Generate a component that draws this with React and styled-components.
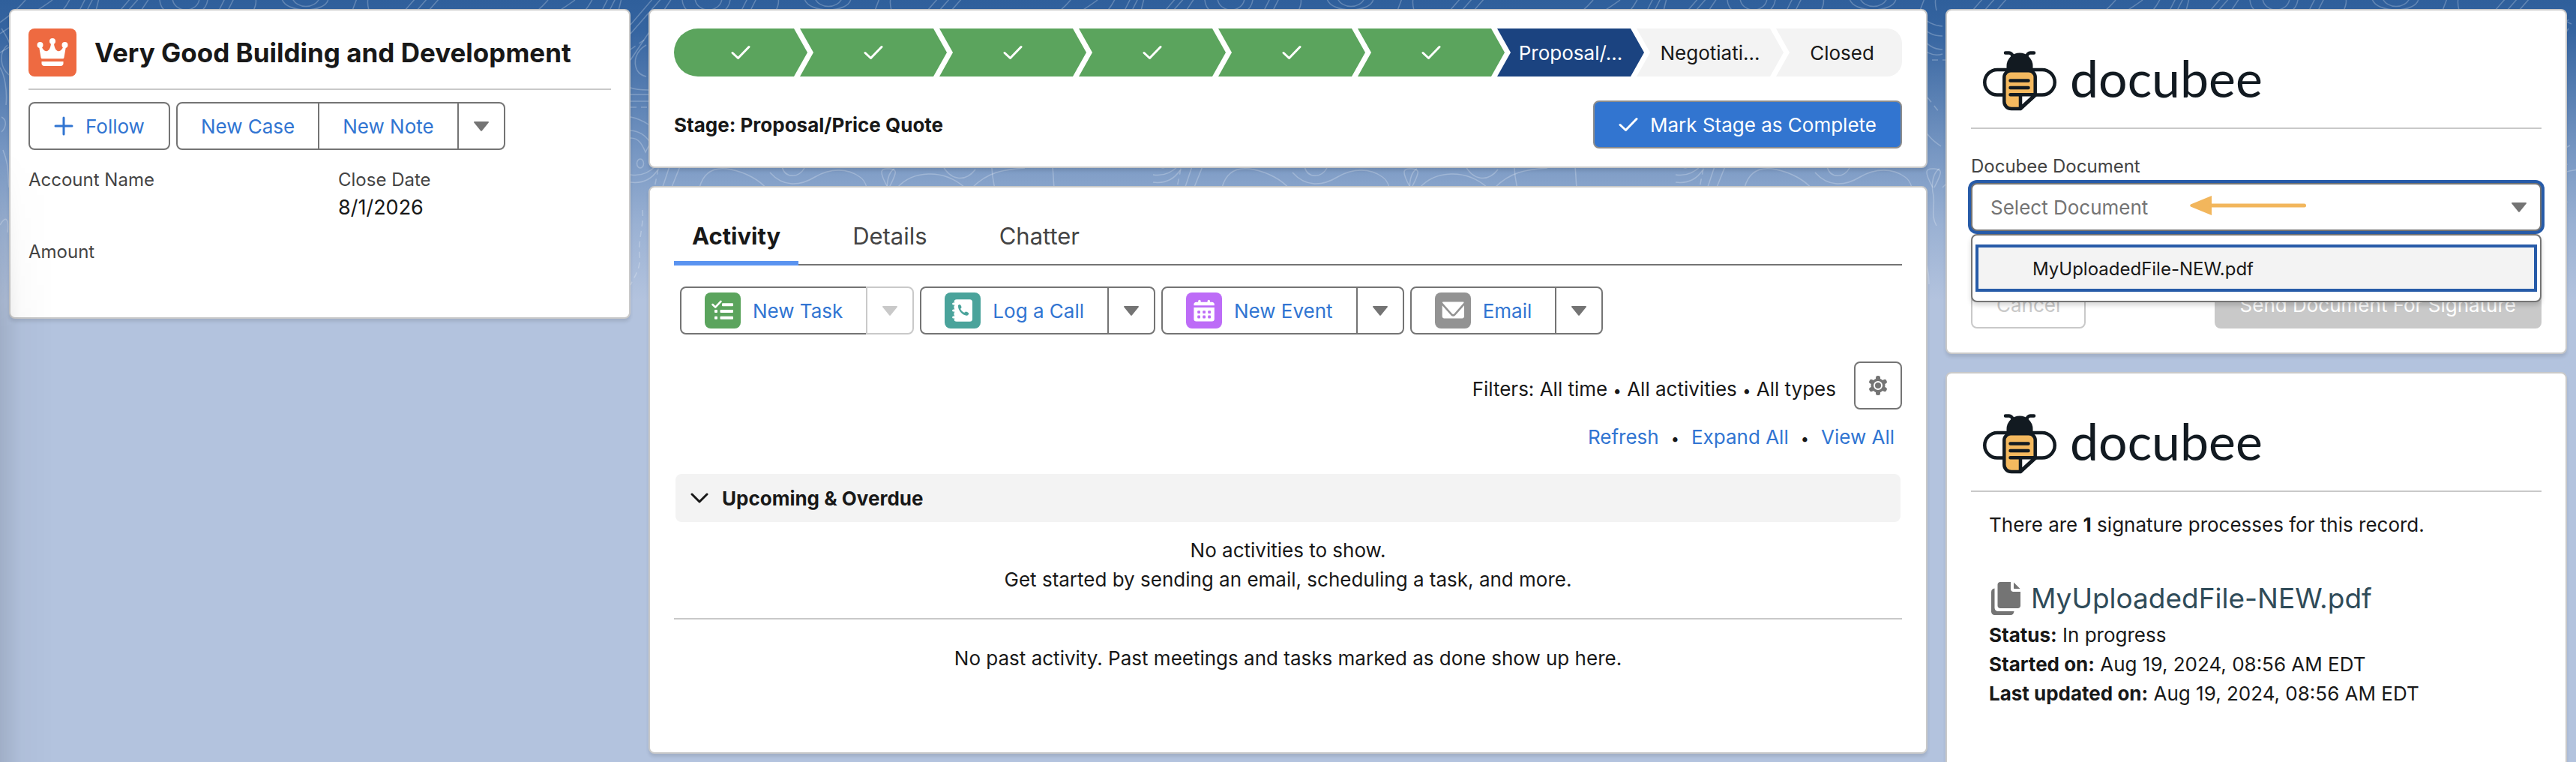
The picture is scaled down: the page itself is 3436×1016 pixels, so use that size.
import React from "react";
import styled, { createGlobalStyle, css } from "styled-components";

const GlobalStyle = createGlobalStyle`
  * {
    box-sizing: border-box;
  }
  body {
    margin: 0;
    background: #b3c3de;
    color: #181818;
    font-family: Inter, "Liberation Sans", sans-serif;
    font-size: 26px;
    line-height: 39px;
  }
  h1, h2, h3, p, ul, ol, dl, dd {
    margin: 0;
    padding: 0;
  }
  button, input {
    font: inherit;
  }
  a {
    color: #3175d2;
    text-decoration: none;
  }
`;

const Page = styled.div`
  position: relative;
  height: 100vh;
  overflow: hidden;
  background: linear-gradient(
      #2f5f9b 0,
      #3564a0 40px,
      #7696c2 200px,
      #9ab1d3 300px,
      #b3c3de 400px
    )
    no-repeat;

  &::after {
    content: "";
    position: absolute;
    inset: 200px auto 0 0;
    width: 72px;
    background: linear-gradient(90deg, rgba(0, 0, 0, 0.1), rgba(0, 0, 0, 0.02) 40%, transparent);
    mask-image: linear-gradient(transparent, #000 240px);
    pointer-events: none;
  }
`;
const Contours = styled.svg`
  position: absolute;
  top: 0;
  left: 0;
  width: 100%;
  height: 400px;
`;
const Columns = styled.main`
  position: relative;
  display: grid;
  grid-template-columns: minmax(0, 829fr) minmax(0, 1706fr) minmax(0, 829fr);
  gap: 24px;
  align-items: start;
  padding: 12px;
`;
const Column = styled.div`
  display: flex;
  flex-direction: column;
  gap: 24px;
`;
const Card = styled.section`
  padding: ${(props) => props.$padding || "24px 32px 24px"};
  background: #fff;
  border: 2px solid #c9c9c9;
  border-radius: 8px;
  box-shadow: 0 4px 4px rgba(0, 0, 0, 0.1);
`;

/* buttons */
const outline = css`
  height: 64px;
  background: #fff;
  border: 2px solid #747474;
  color: #3175d2;
  white-space: nowrap;
`;
const Button = styled.button`
  ${outline}
  display: inline-flex;
  align-items: center;
  justify-content: center;
  gap: 16px;
  padding: 0 32px;
  border-radius: 8px;
  ${(props) =>
    props.$brand &&
    css`
      background: #3275d0;
      border-color: #8c8c8c;
      color: #fff;
    `}
  &:disabled {
    border-color: #c9c9c9;
    background: ${(props) => (props.$brand ? "#c9c9c9" : "#fff")};
    color: ${(props) => (props.$brand ? "#fff" : "#c9c9c9")};
  }
`;
const Group = styled.div`
  display: flex;

  ${Button} {
    padding: 0 31px;
    border-radius: 0;
  }
  ${Button} + ${Button} {
    margin-left: -2px;
  }
  ${Button}:first-child {
    border-radius: 8px 0 0 8px;
  }
  ${Button}:last-child {
    width: 64px;
    padding: 0;
    border-radius: 0 8px 8px 0;
  }
`;
const IconButton = styled(Button)`
  width: 64px;
  padding: 0;
`;
const ButtonRow = styled.div`
  display: flex;
  flex-wrap: wrap;
  gap: 8px;
  margin: ${(props) => props.$margin || "0"};
`;

/* record card */
const RecordHeader = styled.header`
  display: flex;
  align-items: center;
  gap: 24px;
  padding-bottom: 16px;
  margin-bottom: 16px;
  border-bottom: 2px solid #c9c9c9;
`;
const RecordTitle = styled.h1`
  font-size: 35px;
  line-height: 44px;
  font-weight: 700;
`;
const Fields = styled.dl`
  display: grid;
  grid-template-columns: 413px 1fr;
  row-gap: 20px;
  min-height: 199px;
  align-content: start;
  padding-top: 22px;
`;
const Field = styled.div`
  min-height: 76px;
`;
const FieldLabel = styled.dt`
  font-size: 24px;
  line-height: 36px;
  color: #444;
`;
const FieldValue = styled.dd`
  font-size: 27px;
  line-height: 38px;
`;

/* path card */
const Path = styled.ol`
  display: flex;
  list-style: none;
`;
const Step = styled.li`
  flex: 186 1 0;
  min-width: 0;

  &:first-child,
  &:last-child {
    flex-grow: 168;
  }
`;
const stepColors = {
  done: ["#5ba45d", "#fff"],
  current: ["#1b4380", "#fff"],
  next: ["#f3f3f3", "#181818"],
};
const StepLink = styled.a`
  display: flex;
  align-items: center;
  justify-content: center;
  height: 64px;
  margin-right: -10px;
  background: ${(props) => stepColors[props.$state][0]};
  color: ${(props) => stepColors[props.$state][1]};
  clip-path: polygon(
    0 0,
    calc(100% - 18px) 0,
    100% 50%,
    calc(100% - 18px) 100%,
    0 100%,
    18px 50%
  );

  ${Step}:first-child & {
    border-radius: 32px 0 0 32px;
    clip-path: polygon(
      0 0,
      calc(100% - 18px) 0,
      100% 50%,
      calc(100% - 18px) 100%,
      0 100%
    );
  }
  ${Step}:last-child & {
    margin-right: 0;
    padding-left: 8px;
    border-radius: 0 20px 20px 0;
    clip-path: polygon(0 0, 100% 0, 100% 100%, 0 100%, 18px 50%);
  }
`;
const StageRow = styled.div`
  display: flex;
  align-items: center;
  justify-content: space-between;
  margin-top: 32px;
`;
const StageName = styled.h2`
  font-size: 26px;
  font-weight: 700;
`;

/* activity card */
const Tabs = styled.div`
  display: flex;
  gap: 48px;
  border-bottom: 2px solid #747474;
`;
const Tab = styled.button`
  height: 80px;
  margin-bottom: -2px;
  padding: 6px 24px 0;
  background: none;
  border: 0;
  border-bottom: 6px solid ${(props) => (props.$active ? "#5a93f0" : "transparent")};
  color: ${(props) => (props.$active ? "#181818" : "#444")};
  font-size: 31px;
  font-weight: ${(props) => (props.$active ? 700 : 400)};
`;
const Filters = styled.div`
  display: flex;
  align-items: center;
  justify-content: flex-end;
  gap: 24px;
  margin-top: 36px;
`;
const FilterText = styled.p`
  padding-top: 8px;
`;
const Dot = styled.span`
  font-size: 20px;
  line-height: 20px;
`;
const Links = styled.div`
  display: flex;
  align-items: baseline;
  justify-content: flex-end;
  gap: 16px;
  margin-top: 17px;
  padding-right: 10px;
`;
const SectionBar = styled.button`
  display: flex;
  align-items: center;
  gap: 18px;
  width: calc(100% - 4px);
  height: 64px;
  margin: 30px 2px 0;
  padding: 0 20px;
  background: #f3f3f3;
  border: 0;
  border-radius: 8px;
  color: #181818;
  font-weight: 700;
`;
const Empty = styled.p`
  padding: ${(props) => (props.$last ? "32px 0 82px" : "18px 0 32px")};
  text-align: center;
  border-bottom: ${(props) => (props.$last ? "0" : "2px solid #c9c9c9")};
`;

/* docubee cards */
const LogoRow = styled.div`
  display: flex;
  align-items: center;
  gap: 18px;
  height: 126px;
  padding: 0 16px;
  border-bottom: 2px solid #c9c9c9;
`;
const Wordmark = styled.span`
  padding-bottom: 8px;
  font-family: Lato, sans-serif;
  font-size: 68px;
  line-height: 80px;
  color: #121a21;
`;
const PickerLabel = styled.label`
  display: block;
  padding-top: 32px;
  font-size: 24px;
  line-height: 36px;
  color: #444;
`;
const Picker = styled.div`
  position: relative;
  margin-top: 4px;
`;
const PickerInput = styled.input`
  display: block;
  width: 100%;
  height: 64px;
  padding: 0 24px;
  border: 2px solid #747474;
  border-radius: 8px;
  outline: 0;
  box-shadow: 0 0 0 4px #275ba8;

  &::placeholder {
    color: #747474;
    opacity: 1;
  }
`;
const PickerCaret = styled.span`
  position: absolute;
  top: 0;
  right: 20px;
  display: flex;
  align-items: center;
  height: 64px;
`;
const Pointer = styled.svg`
  position: absolute;
  top: 17px;
  left: 292px;
`;
const Listbox = styled.ul`
  position: absolute;
  top: 68px;
  left: 0;
  right: 0;
  z-index: 1;
  padding: 12px 4px;
  list-style: none;
  background: #fff;
  border: 2px solid #747474;
  border-radius: 8px;
  box-shadow: 0 4px 6px rgba(0, 0, 0, 0.16);
`;
const Option = styled.li`
  padding: 11px 72px 8px;
  background: #f3f3f3;
  border: 4px solid #275ba8;
  font-size: 24px;
  line-height: 36px;
`;
const Footer = styled.div`
  display: flex;
  justify-content: space-between;
  margin-top: 66px;
`;
const Processes = styled.div`
  min-height: 400px;
  padding: 24px;
`;
const FileHeading = styled.h3`
  display: flex;
  align-items: center;
  gap: 13px;
  margin-top: 50px;
  padding-left: 3px;
  font-size: 37px;
  line-height: 58px;
  font-weight: 400;

  a {
    color: #2f4b59;
  }
`;

const Check = () => (
  <svg width="26" height="20" viewBox="0 0 26 20" fill="none" stroke="currentColor" strokeWidth="3" strokeLinecap="round" strokeLinejoin="round">
    <path d="M2 10.500 9.500 17.500 24 2.500" />
  </svg>
);

const Caret = ({ color = "#747474" }) => (
  <svg width="20" height="13" viewBox="0 0 20 13" fill={color}>
    <path d="M1 0h18c1 0 1.200.8.700 1.500L11 12.300c-.6.700-1.400.7-2 0L.3 1.500C-.2.800 0 0 1 0z" />
  </svg>
);

const Plus = () => (
  <svg width="26" height="26" viewBox="0 0 26 26" stroke="currentColor" strokeWidth="3" strokeLinecap="round">
    <path d="M13 2v22M2 13h22" />
  </svg>
);

const ChevronDown = () => (
  <svg width="24" height="14" viewBox="0 0 24 14" fill="none" stroke="currentColor" strokeWidth="3" strokeLinecap="round" strokeLinejoin="round">
    <path d="M2 2l10 10L22 2" />
  </svg>
);

const Gear = () => (
  <svg width="26" height="26" viewBox="0 0 26 26" fill="#747474">
    {[0, 60, 120].map((a) => (
      <rect key={a} x="10" y="0" width="6" height="26" rx="2.500" transform={`rotate(${a} 13 13)`} />
    ))}
    <circle cx="13" cy="13" r="9.500" />
    <circle cx="13" cy="13" r="5" fill="none" stroke="#fff" strokeWidth="2" />
  </svg>
);

const CrownIcon = () => (
  <svg width="64" height="64" viewBox="0 0 64 64" fill="#fff">
    <rect width="64" height="64" rx="8" fill="#ee6a41" />
    <circle cx="32" cy="17" r="4" />
    <circle cx="15.500" cy="22" r="4" />
    <circle cx="48.500" cy="22" r="4" />
    <path d="M14 24h3.500c1.500 4 4 6.500 6.500 6.200 3.200-.4 5.500-4.200 6-10.200h4c.5 6 2.800 9.800 6 10.200 2.500.3 5-2.200 6.500-6.200H50l-2.600 15c-.2.800-.7 1.200-1.500 1.200H18.100c-.8 0-1.300-.4-1.500-1.200z" />
    <path d="M17.500 44h29v2.500c0 2-1.500 3.500-3.500 3.500H21c-2 0-3.500-1.500-3.500-3.500z" />
  </svg>
);

const TaskIcon = () => (
  <svg width="48" height="48" viewBox="0 0 48 48" fill="#fff">
    <rect width="48" height="48" rx="8" fill="#5ba45d" />
    <path d="M10.500 16l3.700 3.700 7.300-7.900" fill="none" stroke="#fff" strokeWidth="2.500" strokeLinecap="round" strokeLinejoin="round" />
    <rect x="23" y="14.200" width="15" height="4" rx="1" />
    <rect x="13" y="23" width="4" height="4" rx="1" />
    <rect x="20.500" y="23" width="17.500" height="4" rx="1" />
    <rect x="13" y="31.800" width="4" height="4" rx="1" />
    <rect x="20.500" y="31.800" width="17.500" height="4" rx="1" />
  </svg>
);

const CallIcon = () => (
  <svg width="48" height="48" viewBox="0 0 48 48" fill="#fff">
    <rect width="48" height="48" rx="8" fill="#4aa39b" />
    <rect x="12.500" y="9.300" width="24.500" height="29.400" rx="3.500" />
    <g stroke="#4aa39b" strokeWidth="1.200">
      <rect x="9.500" y="13" width="6" height="4.200" rx="2.100" />
      <rect x="9.500" y="22" width="6" height="4.200" rx="2.100" />
      <rect x="9.500" y="31" width="6" height="4.200" rx="2.100" />
    </g>
    <path d="M13.200 12h3v25h-3z" />
    <path d="M18 17.500c0-.8 1.600-2 2.500-1.500.9.600 2.200 3 2 4-.2.800-1.200 1-1.200 1.800 0 1.600 3.400 5 5 5 .9 0 1-1.200 1.900-1.300 1-.1 3.600 1.400 4 2.300.4 1-.8 2.400-1.700 2.700-5 1.400-13-6-12.500-13z" fill="#4aa39b" />
  </svg>
);

const EventIcon = () => (
  <svg width="48" height="48" viewBox="0 0 48 48" fill="#fff">
    <rect width="48" height="48" rx="8" fill="#bd6cf7" />
    <rect x="16.200" y="9.800" width="3.400" height="6" rx="1.700" />
    <rect x="28.600" y="9.800" width="3.400" height="6" rx="1.700" />
    <path d="M13.500 12.700h21.200c1.800 0 3.100 1.300 3.100 3.100v1.500H10.400v-1.500c0-1.800 1.300-3.100 3.100-3.100z" />
    <path d="M10.400 20h27.400v15.500c0 1.800-1.300 3.100-3.100 3.100H13.500c-1.800 0-3.100-1.300-3.100-3.100z" />
    <g fill="#bd6cf7">
      {[24.200, 30.600].map((y) =>
        [15.200, 22.200, 29.200].map((x) => <rect key={`${x}-${y}`} x={x} y={y} width="3.800" height="3.800" rx="1" />)
      )}
    </g>
  </svg>
);

const EmailIcon = () => (
  <svg width="48" height="48" viewBox="0 0 48 48" fill="#fff">
    <rect width="48" height="48" rx="8" fill="#939393" />
    <path d="M11 12.600h26.500c1 0 1.300.7.700 1.400L25.700 28.200c-.8.900-2 .9-2.800 0L10.300 14c-.6-.7-.3-1.400.7-1.400z" />
    <path d="M9.700 17.200l11.800 13.200c1.600 1.700 4 1.700 5.600 0L39 17.200v14.600c0 1.500-1.200 2.700-2.700 2.700H12.400c-1.500 0-2.700-1.200-2.700-2.700z" />
  </svg>
);

const FilesIcon = () => (
  <svg width="40" height="44" viewBox="0 0 40 44" fill="#747474">
    <path d="M12 0h14v9.500c0 2 1.500 3.500 3.500 3.500H39v18.500c0 2-1.500 3.500-3.500 3.500H12c-2 0-3.500-1.500-3.500-3.500v-28C8.500 1.500 10 0 12 0z" />
    <path d="M30 .500 38.500 9H31c-.6 0-1-.4-1-1z" />
    <path d="M4.500 8.500V34c0 3 2 5 5 5h21c-.3 3-2 5-4.500 5H4.500c-2.500 0-4.500-2-4.500-4.500v-26c0-2.800 1.800-4.700 4.500-5z" />
  </svg>
);

const BeeIcon = () => (
  <svg width="98" height="80" viewBox="0 0 98 80" fill="none" stroke="#121a21" strokeWidth="4.500" strokeLinecap="round" strokeLinejoin="round">
    <path d="M32 25H19a16.750 16.750 0 0 0 0 33.500h9" />
    <path d="M66 25h13a16.750 16.750 0 0 1 0 33.500H70" />
    <path d="M30 2.500h5c3 0 4 2 5 5M68 2.500h-5c-3 0-4 2-5 5" />
    <path d="M31.500 27V20a17.500 17.500 0 0 1 35 0v7z" fill="#121a21" stroke="none" />
    <path d="M28.300 35c0-5 4-8.700 8.700-8.700h24c5 0 8.700 4 8.700 8.700v24L50 77H38c-5.500 0-9.700-4-9.700-9.500z" fill="#f4b95f" />
    <path d="M50 60h18L50 76z" fill="#fff" stroke="none" />
    <path d="M36.500 39.500h24M36.500 49h24M36.500 58.300h33L50 76.500V60" />
  </svg>
);

const DocubeeLogo = () => (
  <LogoRow>
    <BeeIcon />
    <Wordmark>docubee</Wordmark>
  </LogoRow>
);

const Wallpaper = () => (
  <Contours aria-hidden="true">
    <defs>
      <pattern id="contours" width="697" height="400" patternUnits="userSpaceOnUse">
        <g fill="none" stroke="#fff" strokeOpacity="0.24" strokeWidth="1.500">
          <path d="M0 45c30-20 50-30 70-45M0 30C14 20 24 12 34 0M0 70C50 40 80 30 95-5M106 14l8-16M116 14l8-16M128 14l4-16M144 33l30-35M144 45l42-48M144 80l55-82" />
          <path d="M165 60c-14 8-18 22-12 34 3 5 7 7 12 8M144 117c8 3 16 3 24 3M144 126h24M144 135h24M144 156c10 2 18 6 24 10M144 174c12 1 20 6 26 16M144 184c12 0 16 10 20 19l6-12M144 233c12 2 24-2 34-12M144 243c16 2 28-4 36-16" />
          <ellipse cx="157" cy="218" rx="4.500" ry="6" />
          <path strokeDasharray="8 6" d="M144 143h24M144 66l20-14M160 280c2 20-6 40-4 60s-8 30-12 40M174 260l8-40M620 180c10 10 14 30 16 40M480 130l16 20M486 80h24" />
          <path d="M196 222l-10 30M210 222l-12 30M236 250c6-22 22-28 42-24 20 4 38 14 48 26M346 222c4 16 22 16 30 2M330 230c18 20 40 18 60 6s44-12 60 0c6 4 8 10 9 14M487 250c-12-22-10-26 2-25 10 1 12 2 0 25M500 250c20-22 60-26 90 0M560 220c10 20 30 24 44 6M600 250c20-20 40-24 70-26" />
          <path d="M213 0c2 30 60 30 64 0M230-2c2 20 34 20 36 0M300-2l-8 16M312-2l-8 16M338 14c4-8 4-12 3-16M376-2c4 20 60 20 62 0M390-2c6 14 30 14 36 0M470 14l6-16M492 14c-2-8-2-12-1-16M540 14l14-16M556 14l14-16M572 14l14-16" />
          <path d="M470 20c10 10 18 14 30 15M470 34c10 10 18 14 30 14M470 48c10 12 18 18 30 18M470 62c8 8 18 14 30 10M472 165c6 14 14 22 26 30M496 225c-8 4-12 20-8 36 2 16-4 26 4 40M472 335c8 14 10 30 10 44" />
          <path d="M622 16c8 10 14 14 20 16M622 40c8-4 12-10 16-14M620 60c6-4 12-12 18-22M624 110c-8 10-8 30 0 40M632 180c-10 20-8 60 4 90M628 200l12-6" />
          <path d="M2 38c8 12 12 20 14 30M0 90c6 10 10 30 8 50M10 60c-12 10-10 30 2 40M2 156c8 4 6 14 0 20M4 200c8 20 6 30 8 50M0 300c8-14 12-8 10 10" />
        </g>
      </pattern>
    </defs>
    <rect width="100%" height="400" fill="url(#contours)" />
  </Contours>
);

const steps = [
  { state: "done" },
  { state: "done" },
  { state: "done" },
  { state: "done" },
  { state: "done" },
  { state: "done" },
  { state: "current", label: "Proposal/..." },
  { state: "next", label: "Negotiati..." },
  { state: "next", label: "Closed" },
];

const actions = [
  { label: "New Task", icon: <TaskIcon />, disabled: true },
  { label: "Log a Call", icon: <CallIcon /> },
  { label: "New Event", icon: <EventIcon /> },
  { label: "Email", icon: <EmailIcon /> },
];

const RecordCard = () => (
  <Card $padding="24px 24px 24px">
    <RecordHeader>
      <CrownIcon />
      <RecordTitle>Very Good Building and Development</RecordTitle>
    </RecordHeader>
    <ButtonRow>
      <Button>
        <Plus />
        Follow
      </Button>
      <Group>
        <Button>New Case</Button>
        <Button>New Note</Button>
        <Button aria-label="More actions">
          <Caret />
        </Button>
      </Group>
    </ButtonRow>
    <Fields>
      <Field>
        <FieldLabel>Account Name</FieldLabel>
      </Field>
      <Field>
        <FieldLabel>Close Date</FieldLabel>
        <FieldValue>8/1/2026</FieldValue>
      </Field>
      <Field>
        <FieldLabel>Amount</FieldLabel>
      </Field>
    </Fields>
  </Card>
);

const PathCard = () => (
  <Card>
    <Path>
      {steps.map((step, i) => (
        <Step key={i}>
          <StepLink href="#" $state={step.state}>
            {step.label || <Check />}
          </StepLink>
        </Step>
      ))}
    </Path>
    <StageRow>
      <StageName>Stage: Proposal/Price Quote</StageName>
      <Button $brand>
        <Check />
        Mark Stage as Complete
      </Button>
    </StageRow>
  </Card>
);

const ActivityCard = () => (
  <Card>
    <Tabs>
      <Tab $active>Activity</Tab>
      <Tab>Details</Tab>
      <Tab>Chatter</Tab>
    </Tabs>
    <ButtonRow $margin="28px 8px 0">
      {actions.map((action) => (
        <Group key={action.label}>
          <Button>
            {action.icon}
            {action.label}
          </Button>
          <Button aria-label={`More ${action.label} options`} disabled={action.disabled}>
            <Caret color={action.disabled ? "#c9c9c9" : "#747474"} />
          </Button>
        </Group>
      ))}
    </ButtonRow>
    <Filters>
      <FilterText>
        Filters: All time <Dot>•</Dot> All activities <Dot>•</Dot> All types
      </FilterText>
      <IconButton aria-label="Timeline settings">
        <Gear />
      </IconButton>
    </Filters>
    <Links>
      <a href="#">Refresh</a>
      <Dot>•</Dot>
      <a href="#">Expand All</a>
      <Dot>•</Dot>
      <a href="#">View All</a>
    </Links>
    <SectionBar>
      <ChevronDown />
      Upcoming &amp; Overdue
    </SectionBar>
    <Empty>
      No activities to show.
      <br />
      Get started by sending an email, scheduling a task, and more.
    </Empty>
    <Empty $last>No past activity. Past meetings and tasks marked as done show up here.</Empty>
  </Card>
);

const SendCard = () => (
  <Card $padding="32px">
    <DocubeeLogo />
    <PickerLabel htmlFor="document">Docubee Document</PickerLabel>
    <Picker>
      <PickerInput id="document" role="combobox" aria-expanded="true" aria-controls="documents" placeholder="Select Document" readOnly />
      <PickerCaret>
        <Caret />
      </PickerCaret>
      <Pointer width="156" height="26" viewBox="0 0 156 26" fill="#f2b65c">
        <path d="M1 11.500 29 0v26L1 14.500c-1-.6-1-2.400 0-3z" />
        <rect x="26" y="10.500" width="129" height="5" rx="2.500" />
      </Pointer>
      <Listbox id="documents" role="listbox">
        <Option role="option" aria-selected="true">
          MyUploadedFile-NEW.pdf
        </Option>
      </Listbox>
    </Picker>
    <Footer>
      <Button disabled>Cancel</Button>
      <Button $brand disabled>
        Send Document For Signature
      </Button>
    </Footer>
  </Card>
);

const StatusCard = () => (
  <Card $padding="32px">
    <DocubeeLogo />
    <Processes>
      <p>
        There are <b>1</b> signature processes for this record.
      </p>
      <FileHeading>
        <FilesIcon />
        <a href="#">MyUploadedFile-NEW.pdf</a>
      </FileHeading>
      <p>
        <b>Status:</b> In progress
      </p>
      <p>
        <b>Started on:</b> Aug 19, 2024, 08:56 AM EDT
      </p>
      <p>
        <b>Last updated on:</b> Aug 19, 2024, 08:56 AM EDT
      </p>
    </Processes>
  </Card>
);

const App = () => {
  return (
    <Page>
      <GlobalStyle />
      <Wallpaper />
      <Columns>
        <Column>
          <RecordCard />
        </Column>
        <Column>
          <PathCard />
          <ActivityCard />
        </Column>
        <Column>
          <SendCard />
          <StatusCard />
        </Column>
      </Columns>
    </Page>
  );
};

export default App;
